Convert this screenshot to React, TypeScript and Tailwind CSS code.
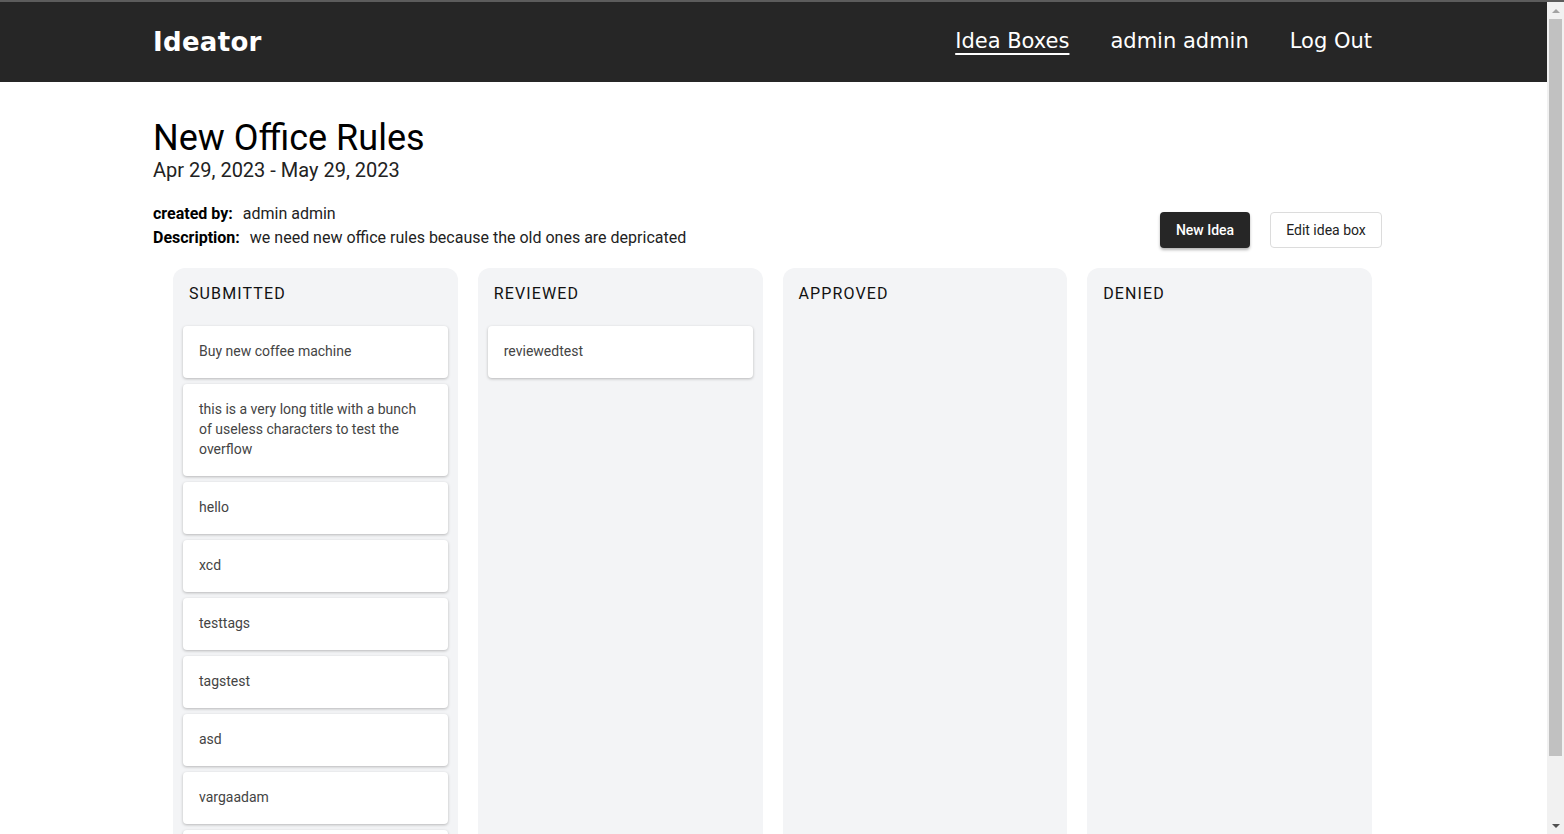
import React from "react";

const columns: { title: string; ideas: string[] }[] = [
  {
    title: "Submitted",
    ideas: [
      "Buy new coffee machine",
      "this is a very long title with a bunch of useless characters to test the overflow",
      "hello",
      "xcd",
      "testtags",
      "tagstest",
      "asd",
      "vargaadam",
      "",
    ],
  },
  { title: "Reviewed", ideas: ["reviewedtest"] },
  { title: "Approved", ideas: [] },
  { title: "Denied", ideas: [] },
];

function Navbar() {
  return (
    <nav className="h-[80px] bg-[#262626] flex items-center justify-between pl-[153px] pr-[175px] font-['DejaVu_Sans',sans-serif] text-white">
      <span className="text-[26px] font-bold tracking-[0.3px]">Ideator</span>
      <div className="flex items-center gap-[41px] text-[21px]">
        <a className="underline underline-offset-[5px] decoration-2">Idea Boxes</a>
        <span>admin admin</span>
        <span>Log Out</span>
      </div>
    </nav>
  );
}

function IdeaCard({ text }: { text: string }) {
  return (
    <div className="bg-white rounded-[4px] shadow-[0_1px_3px_rgba(0,0,0,0.25)] px-4 pt-[15px] pb-[17px] min-h-[52px] text-sm leading-5 text-[#444]">
      {text}
    </div>
  );
}

export default function App() {
  return (
    <div className="h-[834px] overflow-hidden flex flex-col font-['Roboto',sans-serif] bg-white">
      <div className="h-[2px] bg-[#5c5c5c] shrink-0" />
      <div className="flex flex-1 min-h-0">
        <div className="flex-1 min-w-0 flex flex-col">
          <Navbar />

          <main className="pl-[153px] pr-[165px] flex-1 min-h-0 flex flex-col">
            {/* Header */}
            <h1 className="mt-[36px] text-[36px] leading-[40px] text-black">New Office Rules</h1>
            <p className="text-[20px] leading-6 text-[#222]">Apr 29, 2023 - May 29, 2023</p>

            <div className="mt-[20px] flex items-end justify-between">
              <div className="text-base leading-6 text-[#222]">
                <div>
                  <span className="font-bold text-black mr-[10px]">created by:</span>admin admin
                </div>
                <div>
                  <span className="font-bold text-black mr-[10px]">Description:</span>we need new office rules because the old ones are depricated
                </div>
              </div>
              <div className="flex items-center gap-[20px] mb-[2px]">
                <button className="h-9 w-[90px] rounded-[4px] bg-[#262626] text-white text-sm font-medium shadow-[0_2px_3px_rgba(0,0,0,0.3)]">
                  New Idea
                </button>
                <button className="h-9 w-[112px] rounded-[4px] bg-white border border-[#dcdcdc] text-[#222] text-sm">
                  Edit idea box
                </button>
              </div>
            </div>

            {/* Board */}
            <div className="mt-[18px] ml-[20px] mr-[10px] grid grid-cols-4 gap-[20px] flex-1 min-h-0">
              {columns.map((col) => (
                <section key={col.title} className="bg-[#f3f4f6] rounded-t-xl px-[10px] overflow-hidden">
                  <h2 className="px-[6px] pt-[14px] pb-[20px] text-base leading-6 font-normal uppercase tracking-[0.07em] text-[#111]">
                    {col.title}
                  </h2>
                  <div className="flex flex-col gap-[6px]">
                    {col.ideas.map((idea, i) => (
                      <IdeaCard key={i} text={idea} />
                    ))}
                  </div>
                </section>
              ))}
            </div>
          </main>
        </div>

        {/* Scrollbar */}
        <div className="w-[17px] shrink-0 bg-[#f1f1f1] flex flex-col items-center">
          <div className="h-[17px] flex items-center justify-center">
            <div className="w-0 h-0 border-l-[4px] border-r-[4px] border-b-[4px] border-l-transparent border-r-transparent border-b-[#a3a3a3]" />
          </div>
          <div className="w-[13px] h-[737px] bg-[#c1c1c1]" />
          <div className="flex-1" />
          <div className="h-[17px] flex items-center justify-center">
            <div className="w-0 h-0 border-l-[4px] border-r-[4px] border-t-[4px] border-l-transparent border-r-transparent border-t-[#505050]" />
          </div>
        </div>
      </div>
    </div>
  );
}
